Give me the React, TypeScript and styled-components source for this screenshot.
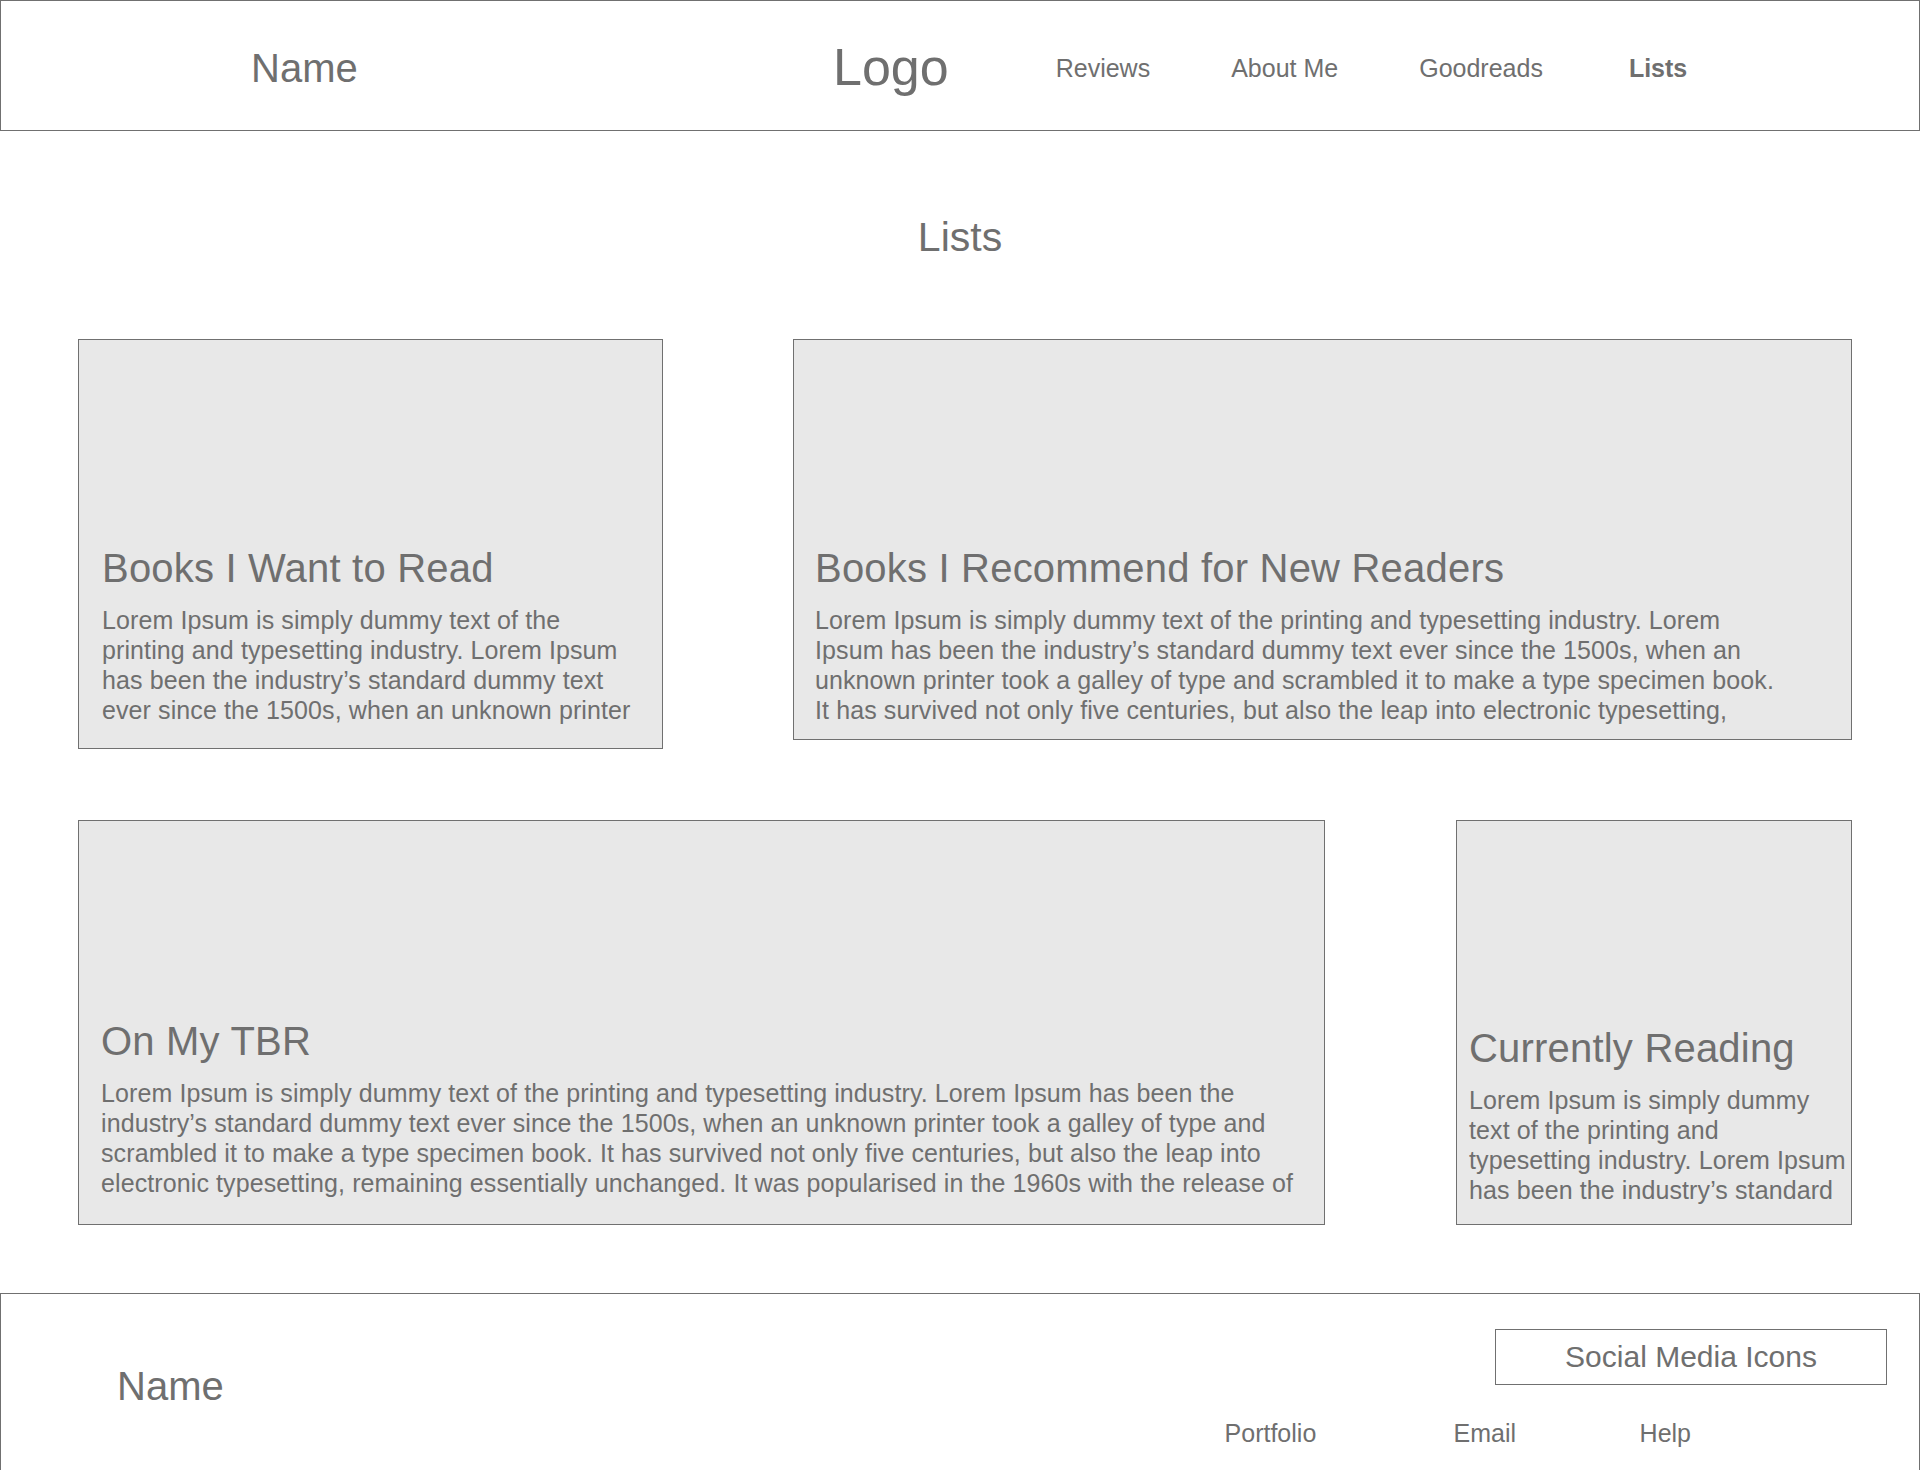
import styled, { createGlobalStyle } from "styled-components";

const GlobalStyle = createGlobalStyle`
  html, body {
    margin: 0;
    padding: 0;
    background: #ffffff;
  }
  body {
    font-family: "Liberation Sans", Arial, Helvetica, sans-serif;
    color: #6f6f6f;
    overflow: hidden;
  }
  * {
    box-sizing: border-box;
  }
`;

const Page = styled.div`
  width: 1920px;
  display: flex;
  flex-direction: column;
`;

const Header = styled.header`
  height: 131px;
  border: 1px solid #707070;
  display: flex;
  align-items: center;
  padding: 4px 0 0 250px;
`;

const BrandName = styled.div<{ $size: number; $drop?: number }>`
  font-size: ${(p) => p.$size}px;
  line-height: 1.2;
  width: 582px;
  padding-top: ${(p) => p.$drop ?? 0}px;
`;

const Logo = styled.div`
  font-size: 52px;
  line-height: 1.2;
`;

const Nav = styled.nav`
  display: flex;
  align-items: center;
  gap: 81px;
  margin-left: 107px;
`;

const NavLink = styled.a<{ $active?: boolean }>`
  font-size: 25px;
  line-height: 1.2;
  color: #6f6f6f;
  text-decoration: none;
  font-weight: ${(p) => (p.$active ? 700 : 400)};
  margin-left: ${(p) => (p.$active ? 5 : 0)}px;
`;

const PageTitle = styled.h1`
  margin: 82px 0 0;
  font-size: 41px;
  line-height: 48px;
  font-weight: 400;
  text-align: center;
`;

const CardRow = styled.section<{ $gap: number; $top: number }>`
  display: flex;
  align-items: flex-start;
  gap: ${(p) => p.$gap}px;
  padding-left: 78px;
  margin-top: ${(p) => p.$top}px;
`;

const Card = styled.article<{ $w: number; $h: number; $padTop: number; $padX: number }>`
  width: ${(p) => p.$w}px;
  height: ${(p) => p.$h}px;
  background: #e8e8e8;
  border: 1px solid #707070;
  padding: ${(p) => p.$padTop}px ${(p) => p.$padX}px 0;
  display: flex;
  flex-direction: column;
`;

const CardTitle = styled.h2`
  margin: 0 0 13px;
  font-size: 40px;
  line-height: 48px;
  font-weight: 400;
  letter-spacing: 0.2px;
  white-space: nowrap;
`;

const CardBody = styled.p`
  margin: 0;
  font-size: 25px;
  line-height: 30px;
  letter-spacing: 0.1px;
`;

const BodyLine = styled.span`
  display: block;
  white-space: nowrap;
`;

const Footer = styled.footer`
  margin-top: 68px;
  height: 177px;
  border: 1px solid #707070;
  border-bottom: none;
  display: flex;
  align-items: center;
  justify-content: space-between;
  padding: 0 32px 0 116px;
`;

const FooterRight = styled.div`
  display: flex;
  flex-direction: column;
  align-items: flex-end;
  gap: 33px;
  padding-top: 12px;
`;

const SocialBox = styled.div`
  width: 392px;
  height: 56px;
  border: 1px solid #707070;
  display: flex;
  align-items: center;
  justify-content: center;
  font-size: 30px;
`;

const FooterLinks = styled.div`
  display: flex;
  margin-right: 196px;
`;

const FooterLink = styled.a<{ $w: number }>`
  width: ${(p) => p.$w}px;
  font-size: 25px;
  line-height: 30px;
  color: #6f6f6f;
  text-decoration: none;
  &:last-child {
    width: auto;
  }
`;

interface ListCard {
  title: string;
  lines: string[];
  w: number;
  h: number;
  padTop: number;
  padX: number;
}

const topRow: ListCard[] = [
  {
    title: "Books I Want to Read",
    lines: [
      "Lorem Ipsum is simply dummy text of the",
      "printing and typesetting industry. Lorem Ipsum",
      "has been the industry’s standard dummy text",
      "ever since the 1500s, when an unknown printer",
    ],
    w: 585,
    h: 410,
    padTop: 204,
    padX: 23,
  },
  {
    title: "Books I Recommend for New Readers",
    lines: [
      "Lorem Ipsum is simply dummy text of the printing and typesetting industry. Lorem",
      "Ipsum has been the industry’s standard dummy text ever since the 1500s, when an",
      "unknown printer took a galley of type and scrambled it to make a type specimen book.",
      "It has survived not only five centuries, but also the leap into electronic typesetting,",
    ],
    w: 1059,
    h: 401,
    padTop: 204,
    padX: 21,
  },
];

const bottomRow: ListCard[] = [
  {
    title: "On My TBR",
    lines: [
      "Lorem Ipsum is simply dummy text of the printing and typesetting industry. Lorem Ipsum has been the",
      "industry’s standard dummy text ever since the 1500s, when an unknown printer took a galley of type and",
      "scrambled it to make a type specimen book. It has survived not only five centuries, but also the leap into",
      "electronic typesetting, remaining essentially unchanged. It was popularised in the 1960s with the release of",
    ],
    w: 1247,
    h: 405,
    padTop: 196,
    padX: 22,
  },
  {
    title: "Currently Reading",
    lines: [
      "Lorem Ipsum is simply dummy",
      "text of the printing and",
      "typesetting industry. Lorem Ipsum",
      "has been the industry’s standard",
    ],
    w: 396,
    h: 405,
    padTop: 203,
    padX: 12,
  },
];

function CardView({ card }: { card: ListCard }) {
  return (
    <Card $w={card.w} $h={card.h} $padTop={card.padTop} $padX={card.padX}>
      <CardTitle>{card.title}</CardTitle>
      <CardBody>
        {card.lines.map((line, i) => (
          <BodyLine key={i}>{line}</BodyLine>
        ))}
      </CardBody>
    </Card>
  );
}

export default function App() {
  return (
    <>
      <GlobalStyle />
      <Page>
        <Header>
          <BrandName $size={40}>Name</BrandName>
          <Logo>Logo</Logo>
          <Nav>
            <NavLink href="#">Reviews</NavLink>
            <NavLink href="#">About Me</NavLink>
            <NavLink href="#">Goodreads</NavLink>
            <NavLink href="#" $active>
              Lists
            </NavLink>
          </Nav>
        </Header>

        <PageTitle>Lists</PageTitle>

        <CardRow $gap={130} $top={78}>
          {topRow.map((c) => (
            <CardView key={c.title} card={c} />
          ))}
        </CardRow>

        <CardRow $gap={131} $top={71}>
          {bottomRow.map((c) => (
            <CardView key={c.title} card={c} />
          ))}
        </CardRow>

        <Footer>
          <BrandName $size={40} $drop={8}>Name</BrandName>
          <FooterRight>
            <SocialBox>Social Media Icons</SocialBox>
            <FooterLinks>
              <FooterLink href="#" $w={229}>Portfolio</FooterLink>
              <FooterLink href="#" $w={186}>Email</FooterLink>
              <FooterLink href="#" $w={0}>Help</FooterLink>
            </FooterLinks>
          </FooterRight>
        </Footer>
      </Page>
    </>
  );
}
